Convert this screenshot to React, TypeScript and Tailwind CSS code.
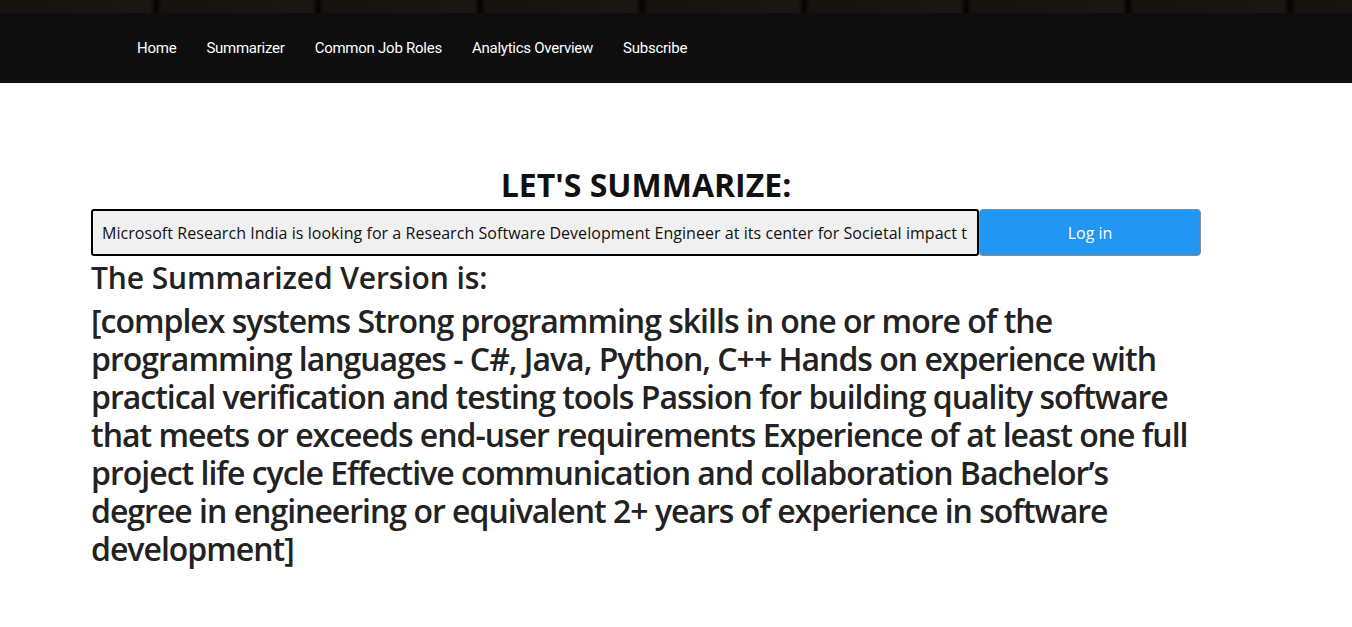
const navItems = ["Home", "Summarizer", "Common Job Roles", "Analytics Overview", "Subscribe"];

const summary =
  "[complex systems Strong programming skills in one or more of the programming languages - C#, Java, Python, C++ Hands on experience with practical verification and testing tools Passion for building quality software that meets or exceeds end-user requirements Experience of at least one full project life cycle Effective communication and collaboration Bachelor\u2019s degree in engineering or equivalent 2+ years of experience in software development]";

export default function App() {
  return (
    <div className="min-h-[627px] bg-white" style={{ fontFamily: '"Open Sans", "Noto Sans", sans-serif' }}>
      <header className="bg-[#0e0e0e]">
        <div className="h-[13px] bg-[repeating-linear-gradient(90deg,#16130f_0px,#1a1612_150px,#050403_156px,#16130f_162px)]" />
        <nav className="flex h-[70px] items-center gap-[30px] pl-[137px] text-[15px] tracking-[-0.25px] text-white" style={{ fontFamily: 'Roboto, "Liberation Sans", sans-serif' }}>
          {navItems.map((n) => (
            <a key={n} href="#" className="leading-none">
              {n}
            </a>
          ))}
        </nav>
      </header>

      <main className="ml-[91px] w-[1110px] pt-[82px]">
        <h1 className="text-center text-[32px] font-bold leading-[40px] text-[#111]">LET'S SUMMARIZE:</h1>
        <form className="mt-[4px] flex h-[47px]" onSubmit={(e) => e.preventDefault()}>
          <input
            readOnly
            value="Microsoft Research India is looking for a Research Software Development Engineer at its center for Societal impact through Cloud and AI"
            className="h-full w-[888px] rounded-[3px] border-2 border-black bg-[#f0f0f0] px-[9px] text-[16px] tracking-[0.05px] text-[#111] outline-none"
          />
          <button type="submit" className="h-full flex-1 rounded-[4px] border border-[#8a8a8a] bg-[#2196f3] text-[16px] text-white">
            Log in
          </button>
        </form>
        <h3 className="mt-[2px] text-[30px] font-semibold leading-[40px] tracking-[-0.1px] text-[#222]">The Summarized Version is:</h3>
        <h2 className="mt-[4px] text-[32px] font-semibold leading-[38px] tracking-[-1px] text-[#222]">{summary}</h2>
      </main>
    </div>
  );
}
